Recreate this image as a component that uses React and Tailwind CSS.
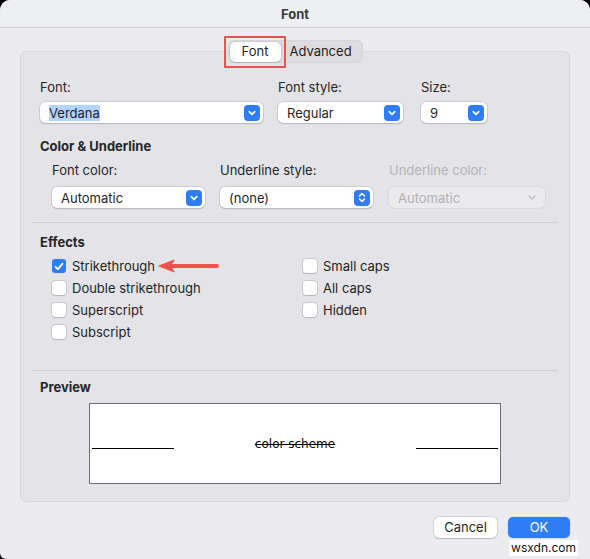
import React from "react";

const font = { fontFamily: "Inter, 'Noto Sans', 'Liberation Sans', sans-serif" };

function Chevron() {
  return (
    <svg width="8" height="6" viewBox="0 0 8 6" fill="none">
      <path d="M1.2 1.6 L4 4.3 L6.8 1.6" stroke="white" strokeWidth="1.6" strokeLinecap="round" strokeLinejoin="round" />
    </svg>
  );
}

function Stepper() {
  return (
    <svg width="8" height="11" viewBox="0 0 8 11" fill="none">
      <path d="M1.5 4 L4 1.5 L6.5 4" stroke="white" strokeWidth="1.5" strokeLinecap="round" strokeLinejoin="round" />
      <path d="M1.5 7 L4 9.5 L6.5 7" stroke="white" strokeWidth="1.5" strokeLinecap="round" strokeLinejoin="round" />
    </svg>
  );
}

function Select({ value, width, stepper, highlight, disabled }) {
  return (
    <div
      className={`flex items-center h-[21px] rounded-[5px] pl-[9px] pr-[3px] shrink-0 ${
        disabled
          ? "bg-[#ebebee] shadow-[0_0_0_0.5px_rgba(0,0,0,0.08)]"
          : "bg-white shadow-[0_0_0_0.5px_rgba(0,0,0,0.18),0_1px_1.5px_rgba(0,0,0,0.12)]"
      }`}
      style={{ width }}
    >
      <span
        className={`text-[13px] leading-[16px] flex-1 ${
          disabled ? "text-[#b0b0b4]" : "text-[#1f1f1f]"
        }`}
      >
        {highlight ? <span className="bg-[#b3d5fd]">{value}</span> : value}
      </span>
      {disabled ? (
        <svg width="10" height="7" viewBox="0 0 10 7" fill="none" className="mr-[5px]">
          <path d="M2 2 L5 5 L8 2" stroke="#bdbdc1" strokeWidth="1.3" strokeLinecap="round" strokeLinejoin="round" />
        </svg>
      ) : (
        <div className="w-[16px] h-[16px] rounded-[4px] bg-[#2f7df6] flex items-center justify-center">
          {stepper ? <Stepper /> : <Chevron />}
        </div>
      )}
    </div>
  );
}

function Checkbox({ label, checked }) {
  return (
    <div className="flex items-center h-[22px]">
      {checked ? (
        <div className="w-[14px] h-[14px] rounded-[3px] bg-[#2f7df6] flex items-center justify-center">
          <svg width="10" height="9" viewBox="0 0 10 9" fill="none">
            <path d="M1.5 4.8 L3.9 7.2 L8.5 1.6" stroke="white" strokeWidth="1.8" strokeLinecap="round" strokeLinejoin="round" />
          </svg>
        </div>
      ) : (
        <div className="w-[14px] h-[14px] rounded-[3px] bg-white shadow-[0_0_0_0.5px_rgba(0,0,0,0.22),0_0.5px_1px_rgba(0,0,0,0.1)]" />
      )}
      <span className="ml-[6px] text-[13px] leading-[16px] text-[#1f1f1f]">{label}</span>
    </div>
  );
}

function Label({ children, disabled }) {
  return (
    <div className={`text-[13px] leading-[16px] ${disabled ? "text-[#b3b3b7]" : "text-[#262626]"}`}>
      {children}
    </div>
  );
}

export default function App() {
  return (
    <div className="w-[590px] h-[559px] bg-black overflow-hidden" style={font}>
      <div className="w-full h-full bg-[#ececf0] rounded-t-[10px] rounded-bl-[6px] flex flex-col">
        {/* title bar */}
        <div className="h-[28px] shrink-0 rounded-t-[10px] bg-[#eeeff3] border-b border-[#d2d2d6] flex items-center justify-center">
          <span className="text-[13px] font-bold text-[#3a3a3a] leading-[16px]">Font</span>
        </div>

        {/* tab switcher */}
        <div className="flex justify-center mt-[12px] relative z-10">
          <div className="flex items-center h-[23px] rounded-[6px] bg-[#dcdce1] shadow-[inset_0_0_0_0.5px_rgba(0,0,0,0.06)] px-[2px]">
            <div className="relative">
              <div className="h-[20px] w-[51px] rounded-[5px] bg-white shadow-[0_0_0_0.5px_rgba(0,0,0,0.15),0_1px_1px_rgba(0,0,0,0.12)] flex items-center justify-center text-[13px] text-[#1f1f1f]">
                Font
              </div>
              <div className="absolute left-[-6px] top-[-6px] w-[62px] h-[32px] border-[2px] border-[#e4564c] rounded-[1px]" />
            </div>
            <div className="w-[80px] flex items-center justify-center text-[13px] text-[#1f1f1f]">Advanced</div>
          </div>
        </div>

        {/* group box */}
        <div className="mx-[20px] mt-[-12px] h-[451px] rounded-[6px] bg-[#e3e3e8] border border-[#d8d8dd] flex flex-col">
          <div className="pl-[19px] pt-[27px] flex gap-[15px]">
            <div className="flex flex-col gap-[7px]">
              <Label>Font:</Label>
              <Select value="Verdana" width={223} highlight />
            </div>
            <div className="flex flex-col gap-[7px]">
              <Label>Font style:</Label>
              <Select value="Regular" width={125} />
            </div>
            <div className="flex flex-col gap-[7px] ml-[3px]">
              <Label>Size:</Label>
              <Select value="9" width={66} />
            </div>
          </div>

          <div className="pl-[19px] mt-[15px] text-[13px] leading-[16px] font-bold text-[#262626]">Color &amp; Underline</div>

          <div className="pl-[31px] mt-[8px] flex gap-[15px]">
            <div className="flex flex-col gap-[9px]">
              <Label>Font color:</Label>
              <Select value="Automatic" width={153} />
            </div>
            <div className="flex flex-col gap-[9px]">
              <Label>Underline style:</Label>
              <Select value="(none)" width={153} stepper />
            </div>
            <div className="flex flex-col gap-[9px] ml-[1px]">
              <Label disabled>Underline color:</Label>
              <Select value="Automatic" width={156} disabled />
            </div>
          </div>

          <div className="mx-[11px] mt-[14px] h-px bg-[#cfcfd4]" />

          <div className="pl-[19px] mt-[11px] text-[13px] leading-[16px] font-bold text-[#262626]">Effects</div>

          <div className="pl-[31px] mt-[5px] flex">
            <div className="w-[251px] flex flex-col relative">
              <Checkbox label="Strikethrough" checked />
              <Checkbox label="Double strikethrough" />
              <Checkbox label="Superscript" />
              <Checkbox label="Subscript" />
              {/* red callout arrow */}
              <svg className="absolute left-[105px] top-[4px]" width="62" height="14" viewBox="0 0 62 14" fill="none">
                <path d="M60 7 H14" stroke="#ef5249" strokeWidth="4" strokeLinecap="round" />
                <path d="M2 7 L17 1.2 L13 7 L17 12.8 Z" fill="#ef5249" stroke="#ef5249" strokeWidth="1.2" strokeLinejoin="round" />
              </svg>
            </div>
            <div className="flex flex-col">
              <Checkbox label="Small caps" />
              <Checkbox label="All caps" />
              <Checkbox label="Hidden" />
            </div>
          </div>

          <div className="mx-[11px] mt-[27px] h-px bg-[#cfcfd4]" />

          <div className="pl-[19px] mt-[8px] text-[13px] leading-[16px] font-bold text-[#262626]">Preview</div>

          <div className="ml-[68px] mt-[8px] w-[412px] h-[81px] bg-white border border-[#6d6d72] flex items-start pt-[33px] px-[2px]">
            <div className="w-[82px] h-px bg-black mt-[11px]" />
            <div
              className="flex-1 text-center text-[12px] leading-[14px] text-black line-through"
              style={{ fontFamily: "'DejaVu Sans', Verdana, sans-serif" }}
            >
              color scheme
            </div>
            <div className="w-[82px] h-px bg-black mt-[11px]" />
          </div>
        </div>

        {/* dialog buttons */}
        <div className="flex justify-end items-center gap-[11px] pr-[20px] mt-[15px]">
          <div className="w-[63px] h-[21px] rounded-[5px] bg-white shadow-[0_0_0_0.5px_rgba(0,0,0,0.18),0_1px_1.5px_rgba(0,0,0,0.12)] flex items-center justify-center text-[13px] text-[#1f1f1f]">
            Cancel
          </div>
          <div className="w-[62px] h-[21px] rounded-[5px] bg-[#2f7df6] shadow-[0_0_0_0.5px_rgba(0,0,0,0.1)] flex items-center justify-center text-[13px] text-white">
            OK
          </div>
        </div>
        <div className="flex justify-end pr-[12px] mt-[2px]">
          <span className="text-[12px] leading-[16px] text-[#111] bg-white px-[2px]">wsxdn.com</span>
        </div>
      </div>
    </div>
  );
}
